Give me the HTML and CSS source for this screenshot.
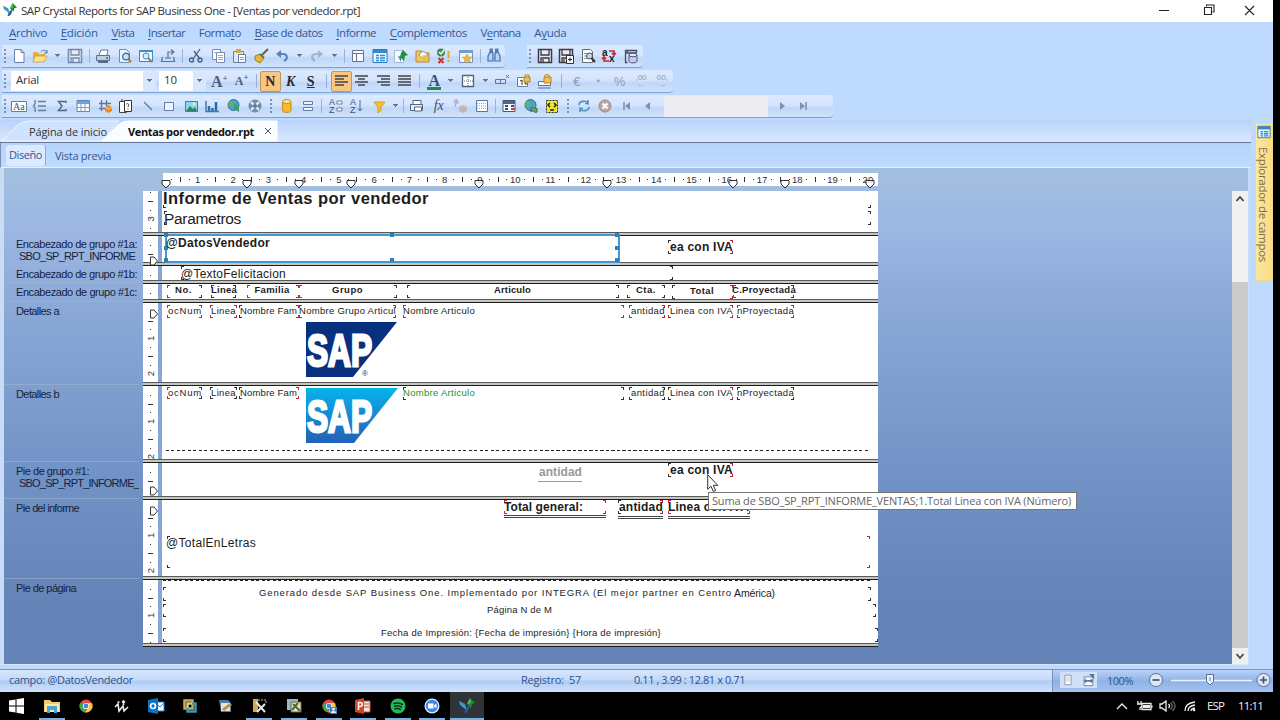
FILE: index.html
```html
<!DOCTYPE html>
<html lang="es">
<head>
    <meta charset="UTF-8">
    <title>SAP Crystal Reports for SAP Business One - [Ventas por vendedor.rpt]</title>
    <link rel="stylesheet" href="styles.css">
</head>
<body>
    <!-- Shared icons -->
    <svg class="defs">
        <defs>
            <linearGradient id="skyBlue" x1="0" y1="0" x2="0" y2="1"><stop offset="0" stop-color="#06b4ea"/><stop offset="1" stop-color="#2460b8"/></linearGradient>
            <symbol id="crystal" viewBox="0 0 16 16"><path d="M0 3l6 3 2 7-3-3-4-3z" fill="#3d9ad0"/><path d="M5 15c3 0 6-3 5-8l-3 3z" fill="#2b56a0"/><path d="M11 0l5 5-3 1-1 4-4-4z" fill="#178a2c"/><path d="M11 0l1 5-4 1z" fill="#55c14e"/></symbol>
            <symbol id="page" viewBox="0 0 16 16"><path d="M3.500 1.500h6.500l3 3v10h-9.500z" fill="#fff" stroke="#6580aa"/><path d="M10 1.500v3h3" fill="none" stroke="#6580aa"/></symbol>
            <symbol id="glass" viewBox="0 0 16 16"><path d="M2.500 1.500h7l3 3v10h-10z" fill="#e9f2ff" stroke="#6a8cb5"/><circle cx="9" cy="8.500" r="3.300" fill="#c6e4fb" stroke="#4179af" stroke-width="1.400"/><path d="M11 11l3 3" stroke="#a37831" stroke-width="2"/></symbol>
            <symbol id="floppy" viewBox="0 0 16 16"><path d="M1.500 1.500h13v13h-13z" fill="#e8ebf2" stroke="currentColor" stroke-width="1.500"/><path d="M4 2v5h8V2M4 14v-4h8v4M6 11v3" fill="none" stroke="currentColor" stroke-width="1.300"/></symbol>
            <symbol id="table" viewBox="0 0 16 16"><path d="M2 2.500h12.500v11H2z" fill="#fff" stroke="#5785bd"/><path d="M2 3h12.500v3H2z" fill="#69a4e0"/><path d="M2 9.500h12.500M6 6v8M10 6v8" stroke="#7d9dc7"/></symbol>
            <symbol id="window" viewBox="0 0 16 16"><path d="M1 1.500h14v13H1z" fill="#eef7ff" stroke="#2579b8"/><path d="M1 1.500h14v3.500H1z" fill="#3189ce"/><path d="M4 7.500h3M8 7.500h5M4 10h3M8 10h5M4 12.500h3M8 12.500h5" stroke="#318ad0" stroke-width="1.500"/></symbol>
            <symbol id="lines" viewBox="0 0 16 16"><path d="M3.500 3.500h9v3h-9zM3.500 9.500h9v3h-9z" fill="#eef5ff" stroke="#677ca1"/></symbol>
            <symbol id="cylinder" viewBox="0 0 16 16"><path d="M3.500 3.500v9c0 2.500 8.500 2.500 8.500 0v-9" fill="#f6bb2e" stroke="#c38a17"/><ellipse cx="7.700" cy="3.500" rx="4.200" ry="2" fill="#ffe69a" stroke="#c38a17"/></symbol>
            <symbol id="globe" viewBox="0 0 16 16"><circle cx="7.500" cy="7" r="5.500" fill="#4aa3cf" stroke="#336b98"/><path d="M3.500 3l4 1-1 3-3 2-1.500-2zM8.500 8l4-1-1 4-3 1z" fill="#65b65b"/></symbol>
            <symbol id="folder" viewBox="0 0 16 16"><path d="M1 4h5l1 2h6v8H1z" fill="#e5af39"/><path d="M3 8h12l-3 6H1z" fill="#ffe18b" stroke="#c6953b" stroke-width=".7"/><path d="M9 4c2-3 5-2 6 1M15 2v3h-3" fill="none" stroke="#4c79aa"/></symbol>
            <symbol id="chrome" viewBox="0 0 16 16"><circle cx="8" cy="8" r="6.500" fill="#e44b3c"/><path d="M2.300 5L8 8l-1 6.400A6.500 6.500 0 0 1 2.300 5z" fill="#37a853"/><path d="M8 5h5.800A6.500 6.500 0 0 1 7 14.400L10.500 9z" fill="#f8c932"/><circle cx="8" cy="8" r="3.100" fill="#fff"/><circle cx="8" cy="8" r="2.400" fill="#4285e8"/></symbol>
        </defs>
    </svg>

    <div class="desktop">
        <div class="window">
            <!-- Title -->
            <div class="titlebar">
                <svg class="app-icon"><use href="#crystal"/></svg>
                <span class="title" data-w="339">SAP Crystal Reports for SAP Business One - [Ventas por vendedor.rpt]</span>
                <svg class="win-controls" viewBox="0 0 100 16"><path d="M4 8.500h10M51.500 4.500V3h7.500v7h-1.500M49.500 5.500h7v7h-7zM90 4l9 9M99 4l-9 9" fill="none" stroke="#222" stroke-width="1.100"/></svg>
            </div>

            <!-- Menu -->
            <div class="menubar">
                <span data-w="38"><u>A</u>rchivo</span>
                <span data-w="37"><u>E</u>dición</span>
                <span data-w="23"><u>V</u>ista</span>
                <span data-w="37"><u>I</u>nsertar</span>
                <span data-w="42">Forma<u>t</u>o</span>
                <span data-w="68"><u>B</u>ase de datos</span>
                <span data-w="40"><u>I</u>nforme</span>
                <span data-w="77"><u>C</u>omplementos</span>
                <span data-w="40">V<u>e</u>ntana</span>
                <span data-w="32">A<u>y</u>uda</span>
            </div>

            <!-- Standard toolbar -->
            <div class="toolrow">
                <div class="toolbar standard">
                    <i class="grip"></i>
                    <svg class="ic"><use href="#page"/></svg>
                    <svg class="ic"><use href="#folder"/></svg><i class="drop"></i>
                    <svg class="ic soft"><use href="#floppy"/></svg><i class="sep"></i>
                    <svg class="ic"><path d="M4 7l2-5h7l-1 5" fill="#fff" stroke="#617ba2"/><path d="M1.500 7.500h13v5h-13z" fill="#c1cedd" stroke="#5b7193"/><path d="M3 14h10" stroke="#53698e" stroke-width="2"/><path d="M11 10h2" stroke="#38a947" stroke-width="2"/></svg>
                    <svg class="ic"><use href="#glass"/></svg>
                    <svg class="ic"><path d="M1.500 2.500h13v11h-13z" fill="#eff7ff" stroke="#358cc3"/><path d="M1 2h14v2H1z" fill="#3a93c9"/><circle cx="8" cy="8" r="3" fill="#d2edff" stroke="#538ab8"/><path d="M10 10l4 4" stroke="#9b7b3a" stroke-width="2"/></svg>
                    <svg class="ic"><path d="M2.500 9l-1 4.500h13L13.500 9M5 10h6M8 10V4h5M11 1.500L14 4l-3 2.500" fill="none" stroke="#596f91" stroke-width="1.200"/></svg><i class="sep"></i>
                    <svg class="ic"><path d="M12 1L5 11M6 3l6 8" stroke="#426085" stroke-width="1.300"/><circle cx="3.500" cy="12" r="2" fill="none" stroke="#426085" stroke-width="1.300"/><circle cx="12" cy="12" r="2" fill="none" stroke="#426085" stroke-width="1.300"/></svg>
                    <svg class="ic"><path d="M2.500 1.500h8v10h-8z" fill="#fff" stroke="#748cb1"/><path d="M6.500 4.500h8v10h-8z" fill="#fff" stroke="#748cb1"/><path d="M8 7.500h5M8 9.500h5M8 11.500h5M4 4.500h2" stroke="#9aacca"/></svg>
                    <svg class="ic"><path d="M2.500 3.500h10v11h-10z" fill="#e3e9f2" stroke="#697f9f"/><path d="M5 1h5v4H5z" fill="#d5ab3b"/><path d="M7.500 6.500h7v8h-7z" fill="#fff" stroke="#647da5"/><path d="M9 9.500h4M9 11.500h4" stroke="#8ca0c0"/></svg>
                    <svg class="ic"><path d="M15 1l-6 6" stroke="#745b2c" stroke-width="2"/><path d="M2 8l5-2 4 4-4 5-5-3z" fill="#e6bb29" stroke="#a57b1e"/><path d="M7 6l4 4" stroke="#526c90" stroke-width="2"/></svg>
                    <svg class="ic"><path d="M4 6h5c5 0 5 5 1 7" fill="none" stroke="#5583bb" stroke-width="2"/><path d="M2 6l5-4v8z" fill="#5583bb"/></svg><i class="drop"></i>
                    <svg class="ic faded"><path d="M12 6H7c-5 0-5 5-1 7" fill="none" stroke="#7d8ca3" stroke-width="2"/><path d="M14 6L9 2v8z" fill="#7d8ca3"/></svg><i class="drop"></i><i class="sep"></i>
                    <svg class="ic"><path d="M2.500 2.500h11v11h-11zM2.500 5.500h11M6.500 5.500v8" fill="#f7faff" stroke="#69758b"/></svg>
                    <svg class="ic"><use href="#window"/></svg>
                    <svg class="ic"><path d="M1.500 2.500h9v12h-9z" fill="#f5faff" stroke="#a9bcd6"/><path d="M10 2l5 5-3 1-1 5-4-4 1-4z" fill="#23913b"/><path d="M5 8l3 1v5z" fill="#3974b5"/></svg>
                    <svg class="ic"><path d="M1 3h6l1 2h6v9H1z" fill="#f0c55e" stroke="#b38b3b"/><path d="M8 3l5 4-5 4-4-4z" fill="#fff" stroke="#829bb5"/><circle cx="10" cy="10" r="3" fill="#efbd45"/></svg>
                    <svg class="ic"><circle cx="5" cy="4.500" r="4" fill="#478c52"/><path d="M3 4l2 2 3-4" fill="none" stroke="#fff" stroke-width="1.300"/><path d="M2.500 10l5 5M7.500 10l-5 5" stroke="#c3352f" stroke-width="2"/><path d="M12.500 3v7M12.500 12v2" stroke="#e5a622" stroke-width="2"/></svg>
                    <svg class="ic"><path d="M1.500 2.500h13v12h-13z" fill="#edf6ff" stroke="#7194bd"/><path d="M1 2h14v3H1z" fill="#6c9fcb"/><path d="M9 6l1.500 3 3.500.3-2.700 2 1 3.200L9 12.700l-3 1.800 1-3.200-2.700-2L7.500 9z" fill="#f2b739" stroke="#ca8222" stroke-width=".5"/></svg><i class="sep"></i>
                    <svg class="ic"><path d="M3.500 2h2v3M12.500 2h-2v3" stroke="#597cab" stroke-width="3" fill="none"/><path d="M2 8l2-4 3 1v8H2zM14 8l-2-4-3 1v8h5z" fill="#b5d5f2" stroke="#426fac" stroke-width="1.200"/></svg>
                </div>
                <div class="toolbar addon">
                    <i class="grip wide"></i>
                    <svg class="ic dark"><use href="#floppy"/></svg>
                    <svg class="ic dark"><use href="#floppy"/><path d="M8.500 7.500h7v8h-7z" fill="#fff" stroke="#333"/><path d="M10 11.500h4M12 9.500v4" stroke="#222"/></svg>
                    <svg class="ic"><path d="M2.500 1.500h8l2 2v11h-10z" fill="#fff" stroke="#5f6a78"/><path d="M4 5.500h5M4 8h3M4 10.500h3" stroke="#8a929d"/><circle cx="9.500" cy="8" r="3" fill="#ccd6e2" stroke="#424b59"/><path d="M11.500 10l3.500 4" stroke="#333" stroke-width="2"/></svg>
                    <svg class="ic"><text class="swap" x="1" y="8">a</text><text class="swap" x="8" y="14">x</text><path d="M8 3h5v4M11 5l2 2 2-2M8 13H3V9M1 11l2-2 2 2" fill="none" stroke="#cf2630" stroke-width="1.700"/></svg>
                    <svg class="ic"><path d="M4.500 14.500h-2V2.500h11V5M2.500 5h11M4.500 2v3" stroke="#414c65" stroke-width="1.300" fill="none"/><path d="M6 7v6c0 2.500 8 2.500 8 0V7" fill="#cccbe6" stroke="#4f557c"/><ellipse cx="10" cy="7" rx="4" ry="1.800" fill="#e7e6fa" stroke="#4f557c"/></svg>
                </div>
            </div>

            <!-- Format toolbar -->
            <div class="toolrow">
                <div class="toolbar format">
                    <i class="grip"></i>
                    <div class="combo font"><span data-w="23">Arial</span><i class="drop"></i></div>
                    <div class="combo size"><span data-w="13">10</span><i class="drop"></i></div>
                    <span class="letter grow">A<sup>+</sup></span>
                    <span class="letter shrink">A<sup>+</sup></span>
                    <i class="sep"></i>
                    <span class="letter pressed">N</span>
                    <span class="letter italic">K</span>
                    <span class="letter under">S</span>
                    <i class="sep wide"></i>
                    <span class="pressed"><svg class="ic"><path d="M2 3h13M2 6h9M2 9h13M2 12h9" stroke="#444" stroke-width="1.700"/></svg></span>
                    <svg class="ic"><path d="M1 3h13M4 6h7M1 9h13M4 12h7" stroke="#444" stroke-width="1.700"/></svg>
                    <svg class="ic"><path d="M1 3h13M5 6h9M1 9h13M5 12h9" stroke="#444" stroke-width="1.700"/></svg>
                    <svg class="ic"><path d="M1 3h13M1 6h13M1 9h13M1 12h13" stroke="#444" stroke-width="1.700"/></svg>
                    <i class="sep"></i>
                    <span class="letter color">A</span><i class="drop"></i>
                    <svg class="ic"><path d="M2.500 2.500h11v11h-11z" fill="#fff" stroke="#52627c" stroke-width="1.300"/><path d="M8 4v9M4 8h9" stroke="#546b8e" stroke-dasharray="1 1"/></svg><i class="drop"></i>
                    <svg class="ic"><path d="M1.500 6.500h10v4h-10zM6.500 6.500v4M12 2l3 3M15 2l-3 3" fill="none" stroke="#61789c"/></svg>
                    <svg class="ic"><path d="M1.500 4.500h10v9h-10z" fill="#fff" stroke="#687b98"/><path d="M4 8l2-1v5M8 10h2v2" stroke="#333" fill="none"/><path d="M9 4V2h4v2" fill="none" stroke="#b28e26"/><path d="M8 4h6v5H8z" fill="#f3c640" stroke="#a58423"/></svg>
                    <svg class="ic"><path d="M1.500 8.500h12v4h-12zM1 15h13" fill="#f8fbff" stroke="#53739f"/><circle cx="10" cy="4" r="2.500" fill="none" stroke="#ab801e"/><path d="M7 4h7v6H7z" fill="#f7bd4a" stroke="#b7832c"/></svg>
                    <i class="sep wide"></i>
                    <span class="num">€</span><span class="num dot">•</span><span class="num">%</span><span class="num decimals">,00<br>←</span><span class="num decimals">00,<br>→</span>
                </div>
            </div>

            <!-- Insert and navigation toolbars -->
            <div class="toolrow">
                <div class="toolbar insert">
                    <i class="grip"></i>
                    <svg class="ic"><path d="M.5 3.500h15v10H.5z" fill="#fff" stroke="#677c9d"/><text class="aa" x="2" y="12">Aa</text></svg>
                    <svg class="ic"><path d="M6 3.500h8M6 8h8M6 12.500h8M4 3H3v3L1.500 8 3 10v3h1" stroke="#687e9e" fill="none" stroke-width="1.300"/></svg>
                    <svg class="ic"><path d="M12 5V3.500H4.500L8 8l-3.500 4.500H12V11" fill="none" stroke="#506783" stroke-width="1.400"/></svg>
                    <svg class="ic"><use href="#table"/></svg>
                    <svg class="ic"><path d="M2 5.500h12M2 10.500h7M4.500 2v11M9.500 2v6" stroke="#62789a" stroke-width="1.300"/><path d="M8 9l3.500-2L15 9v4l-3.500 2L8 13z" fill="#e68a28"/><path d="M8 9l3.500 2L15 9" stroke="#ffd086" fill="none"/></svg>
                    <svg class="ic"><path d="M1.500 3.500h7v11h-7z" fill="#fff" stroke="#444"/><path d="M6.500 2.500h7v11h-7z" fill="#fff" stroke="#333"/><path d="M8.500 6c1-1 3 0 2 1.500L10 9M10 10.500v1M4 1v3" stroke="#333" fill="none"/></svg>
                    <svg class="ic"><path d="M4 4l8 8" stroke="#637898" stroke-width="1.300"/></svg>
                    <svg class="ic"><path d="M3.500 4.500h9v8h-9z" fill="#ecf5ff" stroke="#647da4"/></svg>
                    <svg class="ic"><path d="M2.500 3.500h12v10h-12z" fill="#8cd5f4" stroke="#4e7b8d"/><path d="M3 13l4-5 3 3 2-2 2 4z" fill="#2c8660"/><circle cx="11" cy="6" r="1.500" fill="#fff36b"/></svg>
                    <svg class="ic"><path d="M2 3v10.500h13" stroke="#4179ae" stroke-width="1.500" fill="none"/><path d="M5 13V8M8.500 13v-3M12 13V4" stroke="#2370ad" stroke-width="2.500"/></svg>
                    <svg class="ic"><use href="#globe"/><path d="M8 6l5 2v6l-5-3z" fill="#3d9970"/></svg>
                    <svg class="ic"><circle cx="8" cy="8" r="6.500" fill="#748faa"/><path d="M4 4l8 8M12 4l-8 8" stroke="#eef5fb" stroke-width="2"/><circle cx="8" cy="8" r="2" fill="#547899"/></svg>
                    <i class="grip inner"></i>
                    <svg class="ic"><use href="#cylinder"/></svg>
                    <svg class="ic"><use href="#lines"/></svg>
                    <i class="sep"></i>
                    <svg class="ic"><text class="az" x="1" y="7">A</text><text class="az" x="1" y="15">Z</text><path d="M9 3h5v3H9zM9 10h5v3H9z" fill="#fff" stroke="#6b7c97"/></svg>
                    <svg class="ic"><text class="az" x="1" y="7">A</text><text class="az" x="1" y="15">Z</text><path d="M11 2v11M9 10.500l2 2.500 2-2.500" stroke="#526986" fill="none"/></svg>
                    <svg class="ic"><path d="M3 4h11L10 9v3l-3 3V9z" fill="#f4c22b" stroke="#d59d1a"/></svg><i class="drop"></i><i class="sep"></i>
                    <svg class="ic"><path d="M4 2.500h8v5H4z" fill="#fff" stroke="#546883"/><path d="M1.500 6.500h12v6h-12z" fill="#e7eef7" stroke="#546883"/><path d="M5.500 9h7v4h-7z" fill="#fff" stroke="#546883"/></svg>
                    <span class="fx">fx</span>
                    <svg class="ic faded"><path d="M1 4h6M5 1l-2 8M2 1l4 5" stroke="#777"/><path d="M7 9l4-2 4 2v4l-4 2-4-2z" fill="#c09d75"/></svg>
                    <svg class="ic"><path d="M2.500 2.500h11v11h-11z" fill="#fff" stroke="#5a779f"/><path d="M3 5.500h10M3 8h10M3 10.500h10" stroke="#93abc9" stroke-dasharray="1 1"/></svg>
                    <i class="sep"></i>
                    <svg class="ic"><path d="M2 2.500h12v11H2z" fill="#fff" stroke="#445878"/><path d="M2 3h12v3H2z" fill="#4b6691"/><path d="M4 8h3M4 11h3M10 8h3" stroke="#244e8c" stroke-width="2"/><path d="M10 11h4" stroke="#d43737" stroke-width="2"/></svg>
                    <svg class="ic"><use href="#globe"/><path d="M8 10c2-3 4 2 6 0v4c-2 2-4-3-6 0z" fill="#6a9e82" stroke="#346b5d"/></svg>
                    <svg class="ic"><path d="M2.500 2.500h11v12h-11z" fill="#f1e531" stroke="#2d2d24" stroke-dasharray="2 1"/><path d="M6 5L4 7l2 2M10 5l2 2-2 2M6 12h4" stroke="#222" stroke-width="1.500" fill="none"/></svg>
                    <i class="grip inner"></i>
                    <svg class="ic"><path d="M3 7c0-4 7-5 9-2V2M12 5.500H9M13 9c0 4-7 5-9 2v3M4 10.500h3" fill="none" stroke="#5991bd" stroke-width="1.600"/></svg>
                    <svg class="ic"><circle cx="8" cy="8" r="6" fill="#baa6a3" stroke="#998a8b"/><path d="M5.500 5.500l5 5M10.500 5.500l-5 5" stroke="#fff" stroke-width="2"/></svg>
                    <svg class="ic"><path d="M5 4v8" stroke="#8191ad" stroke-width="1.600"/><path d="M11 4v8L6 8z" fill="#8191ad"/></svg>
                    <svg class="ic"><path d="M10 4v8L5 8z" fill="#8191ad"/></svg>
                    <div class="pagebox"></div>
                    <svg class="ic"><path d="M6 4v8l5-4z" fill="#8191ad"/></svg>
                    <svg class="ic"><path d="M5 4v8l5-4z" fill="#8191ad"/><path d="M11 4v8" stroke="#8191ad" stroke-width="1.600"/></svg>
                </div>
            </div>

            <div class="main">
                <div class="document">
                    <!-- Document tabs -->
                    <div class="tabs">
                        <svg class="tab-shapes" viewBox="0 0 290 22"><path d="M2 21L18 5Q22 1 28 1H119L101 21z" fill="#cfe2ff" stroke="#eef6ff"/><path d="M102 21L118 5Q122 1 128 1H277V21z" fill="#fafdff" stroke="#fff"/></svg>
                        <span class="tab-home" data-w="78">Página de inicio</span>
                        <span class="tab-report" data-w="126">Ventas por vendedor.rpt</span>
                        <svg class="close" viewBox="0 0 8 8"><path d="M1 1l6 6M7 1L1 7" stroke="#555"/></svg>
                    </div>
                    <div class="viewtabs">
                        <span class="selected" data-w="33">Diseño</span>
                        <span data-w="56">Vista previa</span>
                    </div>

                    <!-- Report designer -->
                    <div class="workspace">
                        <div class="hruler"><svg id="hruler" width="715" height="20"></svg></div>
                        <div class="designer">
                            <div class="sections" id="sections">
                                <div class="section title-section" data-origin="-78"><div class="label"></div></div>
                                <div class="section group-a" data-marker="25"><div class="label"><span data-w="121">Encabezado de grupo #1a:</span><span class="sub" data-w="116">SBO_SP_RPT_INFORME</span></div></div>
                                <div class="section group-b"><div class="label"><span data-w="121">Encabezado de grupo #1b:</span></div></div>
                                <div class="section group-c"><div class="label"><span data-w="121">Encabezado de grupo #1c:</span></div></div>
                                <div class="section details-a" data-marker="11"><div class="label"><span data-w="43">Detalles a</span></div></div>
                                <div class="section details-b"><div class="label"><span data-w="43">Detalles b</span></div></div>
                                <div class="section group-foot" data-marker="28"><div class="label"><span data-w="73">Pie de grupo #1:</span><span class="sub" data-w="120">SBO_SP_RPT_INFORME_</span></div></div>
                                <div class="section report-foot" data-marker="11"><div class="label"><span data-w="63">Pie del informe</span></div></div>
                                <div class="section page-foot"><div class="label"><span data-w="60">Pie de página</span></div></div>
                            </div>
                            <div class="canvas" id="canvas">
                                <svg class="logo logo-dark" viewBox="0 0 92 56"><path d="M0 0h91L47 55H0z" fill="#07317f"/><text x="1" y="43.500" textLength="65" lengthAdjust="spacingAndGlyphs">SAP</text><text class="reg" x="56" y="54">®</text></svg>
                                <svg class="logo logo-light" viewBox="0 0 92 56"><path d="M0 0h92L48 55H0z" fill="url(#skyBlue)"/><text x="1" y="43.500" textLength="65" lengthAdjust="spacingAndGlyphs">SAP</text></svg>
                                <div class="selection"><i></i><i></i><i></i><i></i><i></i><i></i><i></i><i></i></div>
                                <div class="tooltip"><span data-w="359">Suma de SBO_SP_RPT_INFORME_VENTAS;1.Total Linea con IVA (Número)</span></div>
                                <svg class="cursor" viewBox="0 0 12 19"><path d="M.7.700v14.500l3.300-3 2.300 5.300 2.300-1-2.300-5.200h4.500z" fill="#fff" stroke="#333"/></svg>
                            </div>
                            <div class="scrollbar">
                                <svg viewBox="0 0 16 16"><path d="M4.500 10L8 6l3.500 4" fill="none" stroke="#444" stroke-width="1.800"/></svg>
                                <div class="thumb"></div>
                                <svg viewBox="0 0 16 16"><path d="M4.500 6L8 10l3.500-4" fill="none" stroke="#444" stroke-width="1.800"/></svg>
                            </div>
                        </div>
                    </div>
                </div>

                <div class="sidebar">
                    <div class="sidetab">
                        <svg class="ic" viewBox="0 0 16 16"><use href="#window"/></svg>
                        <span data-w="115">Explorador de campos</span>
                    </div>
                </div>
            </div>

            <!-- Status bar -->
            <div class="statusbar">
                <span class="field-name"><b data-w="124">campo: @DatosVendedor</b></span>
                <span class="record"><b data-w="60">Registro:&nbsp; 57</b></span>
                <span class="coords"><b data-w="111">0.11 , 3.99 : 12.81 x 0.71</b></span>
                <div class="zoom">
                    <div class="views">
                        <svg class="ic" viewBox="0 0 16 16"><path d="M4.500 2.500h7v11h-7z" fill="#fff" stroke="#8090a8"/><path d="M6 5h4M6 7h4M6 9h4" stroke="#bbc6d4"/></svg>
                        <svg class="ic" viewBox="0 0 16 16"><path d="M3.500 4.500h10v10h-10z" fill="#fff" stroke="#64799b"/><path d="M9 1h6v6zM3 9l3-3v2h5V6l3 3-3 3v-2H6v2z" fill="#59769c"/></svg>
                    </div>
                    <b data-w="26">100%</b>
                    <svg class="slider" viewBox="0 0 120 16"><path d="M23 8.500h81" stroke="#e9f2ff" stroke-width="1.500"/><circle cx="8" cy="8" r="6.500" fill="#dce8f8" stroke="#62728c"/><path d="M4.500 8h7" stroke="#435066" stroke-width="1.700"/><path d="M58.500 2.500h7v7L62 13l-3.500-3.500z" fill="#e9f2fe" stroke="#5a6f94"/><path d="M62 5v4" stroke="#6b7e9e"/><circle cx="115.500" cy="8" r="6.500" fill="#dce8f8" stroke="#62728c"/><path d="M112 8h7M115.500 4.500v7" stroke="#435066" stroke-width="1.700"/></svg>
                </div>
            </div>
        </div>

        <!-- Windows taskbar -->
        <div class="taskbar">
            <span class="task"><svg class="ic"><path d="M0 2.500l6.500-1v6H0zM7.500 1.300L15 0v7.500H7.500zM0 8.500h6.500v6L0 13.500zM7.500 8.500H15V16l-7.500-1.300z" fill="#fff"/></svg></span>
            <span class="task open"><svg class="ic"><path d="M0 2h6l2 2h8v10H0z" fill="#f4cd62"/><path d="M1 6h14v8H1z" fill="#ffe9a1"/><path d="M3 8h10v7h-3v-3H6v3H3z" fill="#46a6d7"/></svg></span>
            <span class="task"><svg class="ic"><use href="#chrome"/></svg></span>
            <span class="task"><svg class="ic"><path d="M2 9l3-3 1 7 4-5 1 5 4-4M4.500 4h2M10.500 3v4M9 4.500L10.500 3 12 4.500" fill="none" stroke="#eee" stroke-width="1.600"/></svg></span>
            <span class="task"><svg class="ic"><path d="M7 4h9v9H7z" fill="#fff" stroke="#2580c3"/><path d="M8 5l4 4 4-4" stroke="#2580c3" fill="none"/><path d="M0 2l10-2v16L0 14z" fill="#0872c6"/><circle cx="5" cy="8" r="2.500" fill="none" stroke="#fff" stroke-width="1.700"/></svg></span>
            <span class="task"><svg class="ic"><path d="M2.500 2.500h8v8h-8z" fill="none" stroke="#e6a23c" stroke-width="2.500"/><path d="M5.500 5.500h8v8h-8z" fill="none" stroke="#3c99b5" stroke-width="2.500"/><path d="M5.500 10V5.500H10" fill="none" stroke="#eed04c" stroke-width="2"/></svg></span>
            <span class="task"><svg class="ic"><path d="M2 2h9l3 3v9H4z" fill="#517ba8"/><path d="M4 5h9v8H4z" fill="#e7e5d4"/><path d="M5 11l8-6 2 2-8 6z" fill="#b88b58"/></svg></span>
            <span class="task open"><svg class="ic"><path d="M2 1h5v13H2z" fill="#d3a74f"/><path d="M7 2h8v4" fill="none" stroke="#b7b7b0" stroke-dasharray="2 1"/><path d="M5 4l9 10M14 6l-8 8" stroke="#e9e9e9" stroke-width="2"/></svg></span>
            <span class="task open"><svg class="ic"><path d="M1 1h11v11H1z" fill="#9fb7c4"/><path d="M5 4h10v10H5z" fill="#eee4a2" stroke="#60654c"/><path d="M6 12l6-7M7 6l7 7" stroke="#4e6448" stroke-width="2"/></svg></span>
            <span class="task open"><svg class="ic"><use href="#chrome"/><path d="M9 9h7v7H9z" fill="#427dc2"/><circle cx="12.500" cy="11" r="1.500" fill="#d7ecff"/><path d="M10 15c0-3 5-3 5 0z" fill="#d7ecff"/></svg></span>
            <span class="task open"><svg class="ic"><path d="M7 3h8v11H7z" fill="#f6e6df" stroke="#cb5337"/><path d="M9 6h5M9 9h5" stroke="#cb5337"/><path d="M0 2l9-2v16l-9-2z" fill="#d24726"/><path d="M3.500 12V4.500H5c3 0 3 4 0 4H3.500" fill="none" stroke="#fff" stroke-width="1.500"/></svg></span>
            <span class="task open"><svg class="ic"><circle cx="8" cy="8" r="7.500" fill="#20bd5c"/><path d="M4 5.500c3-1 6-.5 8.500 1M4.500 8.200c2.500-.8 5-.3 7 1M5 10.800c2-.5 4-.2 5.500.8" fill="none" stroke="#102b19" stroke-width="1.500" stroke-linecap="round"/></svg></span>
            <span class="task open"><svg class="ic"><circle cx="8" cy="8" r="7.500" fill="#e6f1ff"/><circle cx="8" cy="8" r="6.200" fill="#3b86ed"/><path d="M4 5.500h5.500v5H4zM10.300 7l2.200-1.300v4.600L10.300 9z" fill="#fff"/></svg></span>
            <span class="task open active"><svg class="ic"><use href="#crystal"/></svg></span>
            <div class="tray">
                <svg class="tray-icons" viewBox="0 0 82 16"><g fill="none" stroke="#eee" stroke-width="1.300"><path d="M1 11l5-5 5 5M26 5.500h9v6h-9zM36 7.500v2M22 3v3M25 3v3M21 6h5v2l-2 2v2M44 6h2l4-3v10l-4-3h-2zM52.500 6q2 2 0 4"/><path d="M54.500 4.500q3.500 3.500 0 7M56.500 3q5 5 0 10" stroke="#666"/><path d="M69 13q0-8 10-9M72 13q0-5 7-6M75 13q0-2.500 4-3"/></g><path d="M27 7h7v3h-7z" fill="#eee"/><circle cx="78" cy="12" r="1.300" fill="#eee"/></svg>
                <span data-w="17">ESP</span>
                <span class="clock" data-w="25">11:11</span>
            </div>
        </div>
    </div>
    <script src="script.js"></script>
</body>
</html>
```
FILE: styles.css
```css
body {
    margin: 0;
    background: #000;
    font-family: "Open Sans", "Noto Sans", sans-serif;
    font-size: 12px;
    color: #35588f;
    overflow: hidden;
}

.defs {
    position: absolute;
    width: 0;
    height: 0;
}

.desktop {
    display: flex;
    flex-direction: column;
    width: 1280px;
    height: 720px;
}

.window {
    display: flex;
    flex-direction: column;
    width: 1273px;
    height: 692px;
    background: #bfdaff;
}

span, b {
    white-space: nowrap;
}

b {
    font-weight: normal;
}

/* Title and menu */
.titlebar {
    display: flex;
    align-items: center;
    height: 22px;
    background: #fff;
    color: #333;
}

.app-icon {
    width: 14px;
    height: 14px;
    margin: 0 4px 2px 3px;
}

.title {
    flex: 1;
    margin-bottom: 1px;
    font-size: 11.5px;
}

.win-controls {
    flex: none;
    width: 100px;
    height: 16px;
    margin: 0 18px 2px 0;
}

.menubar {
    display: flex;
    align-items: center;
    gap: 13.7px;
    height: 21px;
    padding: 0 0 2px 9px;
    font-size: 11.5px;
}

u {
    text-underline-offset: 2px;
}

/* Toolbars */
.toolrow {
    display: flex;
    gap: 22px;
    height: 23px;
    margin: 0 0 2px 2px;
}

.toolbar {
    display: flex;
    align-items: center;
    box-sizing: border-box;
    height: 23px;
    background: linear-gradient(#dceaff, #d3e4fd 45%, #c1d7f7 60%, #cfe3fd);
    border-bottom: 1px solid #7c9fd0;
    border-radius: 0 4px 4px 0;
}

.standard {
    width: 503px;
}

.addon {
    width: 116px;
}

.format {
    width: 671px;
}

.insert {
    width: 831px;
}

.ic {
    flex: none;
    width: 16px;
    height: 16px;
    margin: 0 2.75px;
    overflow: visible;
    font-family: "Liberation Serif", serif;
}

.soft {
    color: #6f89ae;
}

.dark {
    color: #3c3948;
}

.faded {
    opacity: .55;
}

.grip {
    flex: none;
    width: 2px;
    height: 14px;
    margin: 0 2px;
    background: repeating-linear-gradient(#7893ba 0 2px, transparent 2px 4px);
}

.grip.wide {
    margin: 0 3px 0 2px;
}

.grip.inner {
    margin: 0 4px;
}

.sep {
    flex: none;
    width: 1px;
    height: 14px;
    margin: 0 3px;
    background: #9ab2d6;
}

.insert .sep {
    margin: 0 3px 0 2px;
}

.insert .drop {
    width: 11px;
}

.sep.wide {
    margin: 0 4px 0 5px;
}

.drop {
    flex: none;
    width: 13px;
    height: 4px;
    background: conic-gradient(from -45deg at 50% 75%, #64748e 90deg, transparent 0) center / 5px 4px no-repeat;
}

.combo {
    display: flex;
    align-items: center;
    justify-content: space-between;
    box-sizing: border-box;
    height: 20px;
    padding-left: 5px;
    background: #fff;
    color: #333;
    font-size: 11.5px;
    line-height: 16px;
}

.combo .drop {
    height: 20px;
    background-color: #d8e7fc;
}

.combo span {
    margin-bottom: 2px;
}

.font {
    width: 146px;
    margin-left: 3px;
}

.size {
    width: 47px;
    margin: 0 2px 0 3px;
}

.letter {
    flex: none;
    width: 20px;
    text-align: center;
    font: bold 14px/19px "Liberation Serif", serif;
    color: #292929;
}

.letter sup {
    font-size: 9px;
    line-height: 0;
}

.grow {
    width: 23px;
    font-size: 16px;
    color: #4e5d77;
}

.shrink {
    width: 22px;
    font-size: 12px;
    color: #4e5d77;
}

.pressed {
    display: flex;
    align-items: center;
    justify-content: center;
    box-sizing: border-box;
    width: 21px;
    height: 21px;
    background: #f8c681;
    border: 1px solid #c1965b;
    border-radius: 2px;
}

.italic {
    font-style: italic;
}

.under {
    text-decoration: underline;
}

.color {
    margin-left: 4px;
    height: 17px;
    width: 14px;
    margin-right: 3px;
    box-sizing: border-box;
    border-bottom: 3px solid #159036;
    font-size: 16px;
    line-height: 15px;
    color: #355181;
}

.num {
    width: 21.5px;
    text-align: center;
    color: #8c9ab3;
    font: 13px "Liberation Sans", sans-serif;
}

.num.dot {
    font-size: 9px;
}

.num.decimals {
    font-size: 8px;
    line-height: 7px;
}

.fx {
    width: 21.5px;
    text-align: center;
    font: italic 14px "Liberation Serif", serif;
    color: #3d4c65;
}

.swap {
    font: bold 10px "Liberation Sans", sans-serif;
    fill: #222;
}

.aa {
    font-size: 10px;
    fill: #42536f;
}

.az {
    font: 9px "Liberation Sans", sans-serif;
    fill: #42536f;
}

.pagebox {
    width: 104px;
    height: 21px;
    margin: 0 3px 0 5px;
    background: #ececf1;
}

/* Document area */
.main {
    display: flex;
    flex: 1;
    min-height: 0;
}

.document {
    display: flex;
    flex-direction: column;
    width: 1251px;
}

.tabs {
    display: flex;
    position: relative;
    align-items: center;
    box-sizing: border-box;
    height: 23px;
    padding-left: 29px;
    background: linear-gradient(#b8d3fb, #dae8ff);
    border-bottom: 1px solid #66789a;
    color: #333;
    font-size: 11px;
}

.tab-shapes {
    position: absolute;
    left: 0;
    bottom: 0;
    width: 290px;
    height: 22px;
}

.tab-home, .tab-report, .close {
    position: relative;
}

.tab-report {
    margin-left: 21px;
    font-weight: bold;
    color: #111;
}

.close {
    width: 8px;
    height: 8px;
    margin-left: 10px;
}

.viewtabs {
    display: flex;
    align-items: center;
    height: 24px;
    padding-left: 5px;
    background: linear-gradient(#b5d2fa, #bfdcff);
    border-left: 1px solid #7890b5;
    border-bottom: 1px solid #e5f1ff;
    font-size: 11px;
}

.viewtabs .selected {
    height: 21px;
    line-height: 20px;
    margin: 0 9px 0 0;
    padding: 0 3px;
    background: #dceaff;
    border-right: 1px solid #8ea9d2;
    border-radius: 3px;
}

.workspace {
    box-sizing: border-box;
    height: 497px;
    width: 1249px;
    padding-top: 5px;
    background: linear-gradient(#a4c0e0, #9bb6e2 13%, #8aa8d6 29%, #7293c6 61%, #6484b7 88%);
    border-left: 4px solid #c9dcf3;
    border-bottom: 1px solid #d7e5f9;
    border-right: 1px solid #cde0fb;
}

.hruler {
    width: 715px;
    height: 13px;
    margin: 0 0 5px 159px;
    background: #fff;
}

#hruler {
    display: block;
    position: relative;
    z-index: 1;
    overflow: visible;
}

.designer {
    display: flex;
    position: relative;
    height: 473px;
}

.sections {
    width: 874px;
}

.section {
    display: flex;
    box-sizing: content-box;
}

.label {
    display: flex;
    flex-direction: column;
    box-sizing: border-box;
    width: 135px;
    margin: -2px 4px 0 0;
    padding: 3px 0 0 12px;
    border-top: 1px solid #a4b6ce88;
    overflow: hidden;
    color: #15233d;
    font: 11px/12px "Liberation Sans", sans-serif;
}

.label .sub {
    margin-left: 3px;
}

.title-section .label {
    border: none;
}

/* The divider under each section is painted in the transparent border */
.body {
    display: flex;
    width: 735px;
    border-bottom: 4px solid transparent;
    background:
        linear-gradient(#5a5a5a 0 25%, #c4c6c2 25% 75%, #1c1c1c 75%) bottom / 100% 4px no-repeat border-box border-box,
        #fff;
}

.vruler {
    width: 15px;
    height: 100%;
    overflow: visible;
}

.body::after {
    content: "";
    width: 4px;
    background: #87a5d5;
}

.title-section { height: 45px; }
.group-a { height: 30px; }
.group-b { height: 18px; }
.group-c { height: 19px; }
.details-a { height: 83px; }
.details-b { height: 77px; }
.group-foot { height: 37px; }
.report-foot { height: 80px; }
.page-foot { height: 67px; }

.ruler-text {
    font: 9.5px "Liberation Sans", sans-serif;
    fill: #333;
}

.scrollbar {
    display: flex;
    flex-direction: column;
    width: 16px;
    height: 473px;
    margin-left: 354px;
    background: #f0f0f0;
}

.thumb {
    flex: 1;
    margin-top: 75px;
    background: #cbcbcb;
}

/* Report objects are placed freely on the canvas */
.canvas {
    position: absolute;
    left: 139px;
    top: 0;
    width: 735px;
    height: 456px;
    clip-path: inset(0 -300px 0 0);
}

.field {
    --l: #333;
    --r: #333;
    position: absolute;
    background:
        linear-gradient(var(--l) 0 0) 0 0 / 3px 1px,
        linear-gradient(var(--l) 0 0) 0 0 / 1px 3px,
        linear-gradient(var(--l) 0 0) 0 100% / 3px 1px,
        linear-gradient(var(--l) 0 0) 0 100% / 1px 3px,
        linear-gradient(var(--r) 0 0) 100% 0 / 3px 1px,
        linear-gradient(var(--r) 0 0) 100% 0 / 1px 3px,
        linear-gradient(var(--r) 0 0) 100% 100% / 3px 1px,
        linear-gradient(var(--r) 0 0) 100% 100% / 1px 3px;
    background-repeat: no-repeat;
}

.red-left { --l: #c3213c; }
.red-right { --r: #c3213c; }

.text {
    position: absolute;
    font-family: "Liberation Sans", sans-serif;
    line-height: 1;
    color: #1c1c1c;
}

.bold {
    font-weight: bold;
}

.green {
    color: #23902a;
}

.gray {
    color: #999;
}

.line {
    position: absolute;
    height: 1px;
    background: #444;
}

.line.dashed {
    background: repeating-linear-gradient(90deg, #222 0 3px, transparent 3px 5.5px);
}

.line.light {
    background: #999;
}

.selection {
    position: absolute;
    left: 22px;
    top: 43px;
    width: 451px;
    height: 25px;
    border: 2px solid #4396d2;
}

.selection i {
    position: absolute;
    width: 4px;
    height: 4px;
    margin: -3px;
    background: #2b80be;
}

.selection i:nth-child(1) { left: 0; top: 0; }
.selection i:nth-child(2) { left: 50%; top: 0; }
.selection i:nth-child(3) { left: 100%; top: 0; }
.selection i:nth-child(4) { left: 0; top: 50%; }
.selection i:nth-child(5) { left: 100%; top: 50%; }
.selection i:nth-child(6) { left: 0; top: 100%; }
.selection i:nth-child(7) { left: 50%; top: 100%; }
.selection i:nth-child(8) { left: 100%; top: 100%; }

.logo {
    position: absolute;
    left: 163px;
    width: 92px;
    height: 56px;
    overflow: visible;
}

.logo text {
    font: bold 45px "Liberation Sans", sans-serif;
    fill: #fff;
    stroke: #fff;
    stroke-width: 2.8px;
}

.logo .reg {
    font: 8px "Liberation Sans", sans-serif;
    fill: #333;
    stroke: none;
}

.logo-dark { top: 131px; }
.logo-light { top: 197px; }

.tooltip {
    position: absolute;
    z-index: 2;
    left: 565px;
    top: 301px;
    box-sizing: border-box;
    width: 369px;
    height: 18px;
    padding-left: 3px;
    background: #fff;
    border: 1px solid #777;
    color: #666;
    font-size: 11px;
    line-height: 15px;
}

.cursor {
    position: absolute;
    z-index: 3;
    left: 564px;
    top: 283px;
    width: 12px;
    height: 19px;
}

/* Field explorer tab */
.sidebar {
    flex: 1;
    padding: 3px 0 0 4px;
}

.sidetab {
    box-sizing: border-box;
    width: 18px;
    height: 158px;
    padding-top: 1px;
    background: linear-gradient(90deg, #fde69d, #fbdc84);
    border: 1px solid #f4d98a;
    color: #776c50;
    font-size: 11.5px;
}

.sidetab .ic {
    display: block;
    width: 14px;
    height: 14px;
    margin: 0 1px 8px;
}

.sidetab span {
    display: block;
    writing-mode: vertical-rl;
    line-height: 15px;
}

/* Status bar */
.statusbar {
    display: flex;
    align-items: center;
    height: 22px;
    background: linear-gradient(#d7e6fc, #c4daf8 45%, #afcbf5 50%, #d2e3fb);
    border-top: 1px solid #7d95b9;
    color: #2f5288;
    font-size: 11px;
    line-height: 13px;
}

.statusbar > span {
    margin-bottom: 3px;
}

.field-name {
    width: 512px;
    padding-left: 9px;
}

.record {
    width: 113px;
}

.coords {
    width: 418px;
}

.zoom {
    display: flex;
    align-items: center;
    flex: 1;
    box-sizing: border-box;
    height: 22px;
    padding: 0 0 2px 7px;
    background: linear-gradient(#b8d2f8, #8fb2e6 50%, #a3c2ee);
    border-left: 1px solid #7592c0;
}

.views {
    display: flex;
    align-items: center;
    gap: 4px;
    width: 37px;
    height: 16px;
    margin-right: 10px;
    background: #d0e0f7;
}

.views .ic {
    height: 14px;
    margin: 0;
}

.slider {
    flex: none;
    width: 120px;
    height: 16px;
    margin-left: 15px;
    overflow: visible;
}

/* Taskbar */
.taskbar {
    display: flex;
    width: 1280px;
    height: 28px;
    background: #000;
    color: #eee;
}

.task {
    display: flex;
    align-items: center;
    justify-content: center;
    box-sizing: border-box;
    width: 34.6px;
    border: 0 solid transparent;
    border-width: 0 4px;
}

.task .ic {
    margin: 0;
}

.task.open {
    background: linear-gradient(#76b2e4 0 0) bottom / 26px 2px no-repeat;
}

.task.active {
    border-width: 0;
    background: linear-gradient(#76b2e4 0 0) bottom / 100% 2px no-repeat #313437;
}

.tray {
    display: flex;
    align-items: center;
    margin-left: auto;
    padding-right: 17px;
    font-size: 11.5px;
}

.tray-icons {
    width: 82px;
    height: 16px;
    margin-right: 9px;
}

.tray span {
    margin-bottom: 2px;
}

.tray .clock {
    margin-left: 14px;
}
```
FILE: script.js
```js
const CM = 35.27;
const SVG = 'http://www.w3.org/2000/svg';

// Window position of the canvas corner
const ORIGIN = { x: 143, y: 191 };

// Spread the letters so the text fills the given width
function fitText(el, width) {
    el.style.letterSpacing = '0px';
    const vertical = getComputedStyle(el).writingMode !== 'horizontal-tb';
    const range = document.createRange();
    range.selectNodeContents(el);
    const box = range.getBoundingClientRect();
    const natural = vertical ? box.height : box.width;
    el.style.letterSpacing = ((width - natural) / el.textContent.length) + 'px';
}

function shape(svg, name, attrs, text) {
    const el = document.createElementNS(SVG, name);
    for (const key in attrs) el.setAttribute(key, attrs[key]);
    if (text) el.textContent = text;
    svg.appendChild(el);
}

// Horizontal ruler
const hruler = document.getElementById('hruler');
for (let q = 1; q < 81; q++) {
    const x = q * CM / 4 - 0.5;
    if (q % 4 === 0) {
        shape(hruler, 'text', { x: x, y: 10, class: 'ruler-text', 'text-anchor': 'middle' }, String(q / 4));
    } else if (q % 2 === 0) {
        shape(hruler, 'rect', { x: Math.round(x), y: 4, width: 1, height: 5, fill: '#333' });
    } else {
        shape(hruler, 'rect', { x: Math.round(x), y: 6, width: 1, height: 1, fill: '#333' });
    }
}
[166, 246.5, 299, 351, 478.5, 606.5, 733, 785, 870].forEach(x => {
    const left = Math.round(x) - 163;
    shape(hruler, 'path', { d: `M${left - 4} 7.500h8v3.500l-4 4-4-4z`, fill: '#fff', 'fill-opacity': 0.7, stroke: '#333' });
});

// Vertical rulers, one for each section
document.querySelectorAll('.section').forEach(section => {
    const body = document.createElement('div');
    body.className = 'body';
    const ruler = document.createElementNS(SVG, 'svg');
    ruler.setAttribute('class', 'vruler');
    body.appendChild(ruler);
    section.appendChild(body);

    const height = section.clientHeight - 4;
    const origin = Number(section.dataset.origin || 0);
    for (let q = 1; origin + q * CM / 4 < height - 1; q++) {
        const y = origin + q * CM / 4;
        if (y < 0) continue;
        if (q % 4 === 0) {
            shape(ruler, 'text', { transform: `translate(11 ${y}) rotate(-90)`, class: 'ruler-text', 'text-anchor': 'middle' }, String(q / 4));
        } else if (q % 2 === 0) {
            shape(ruler, 'rect', { x: 5, y: Math.round(y), width: 5, height: 1, fill: '#333' });
        } else {
            shape(ruler, 'rect', { x: 7, y: Math.round(y), width: 1, height: 1, fill: '#333' });
        }
    }
    if (section.dataset.marker) {
        const y = Number(section.dataset.marker);
        shape(ruler, 'path', { d: `M7.500 ${y - 4}v8h3.500l3.500-4-3.500-4z`, fill: '#fff', stroke: '#333' });
    }
});

// Object frames: x, y, width, height, corner classes
const frames = [
    [163, 188, 708, 20, ''],
    [164, 211, 707, 14, ''],
    [668, 240, 65, 14, 'red-right'],
    [181, 266, 492, 14, ''],
    [167, 285, 35, 13, 'red-left'],
    [211, 285, 25, 13, ''],
    [247, 285, 52, 13, 'red-left red-right'],
    [299, 285, 98, 13, 'red-left'],
    [407, 285, 212, 13, ''],
    [627, 285, 38, 13, ''],
    [672, 285, 61, 14, 'red-right'],
    [733, 285, 61, 13, 'red-left'],
    [167, 305, 35, 13, 'red-left red-right'],
    [210, 305, 27, 13, 'red-left red-right'],
    [239, 305, 60, 13, 'red-right'],
    [299, 305, 97, 13, 'red-left red-right'],
    [403, 305, 221, 13, 'red-left red-right'],
    [629, 305, 36, 13, 'red-left red-right'],
    [668, 305, 65, 13, 'red-left red-right'],
    [737, 305, 57, 13, 'red-left red-right'],
    [167, 387, 35, 12, 'red-left'],
    [210, 387, 27, 12, ''],
    [239, 387, 60, 12, 'red-right'],
    [403, 387, 221, 13, ''],
    [629, 387, 36, 13, ''],
    [668, 387, 65, 13, 'red-right'],
    [737, 387, 57, 13, ''],
    [668, 463, 65, 14, 'red-right'],
    [504, 500, 102, 14, 'red-left red-right'],
    [618, 500, 45, 14, 'red-right'],
    [668, 500, 82, 14, 'red-left red-right'],
    [167, 536, 703, 32, 'red-right'],
    [163, 587, 708, 14, ''],
    [163, 604, 713, 13, ''],
    [163, 628, 715, 14, '']
];

// Text: x, baseline, width, size, content, classes
const texts = [
    [163, 203.5, 266, 16.5, 'Informe de Ventas por vendedor', 'bold'],
    [164, 224, 77, 15.5, 'Parametros', ''],
    [166, 247, 104, 12, '@DatosVendedor', 'bold'],
    [670, 251, 63, 12, 'ea con IVA', 'bold'],
    [181, 278, 105, 12, '@TextoFelicitacion', ''],
    [175, 293.5, 17, 9.5, 'No.', 'bold'],
    [211, 293.5, 26, 9.5, 'Linea', 'bold'],
    [254.5, 293.5, 35, 9.5, 'Familia', 'bold'],
    [332, 293.5, 31, 9.5, 'Grupo', 'bold'],
    [494, 293.5, 37, 9.5, 'Articulo', 'bold'],
    [636, 293.5, 20, 9.5, 'Cta.', 'bold'],
    [690, 294.5, 24, 9.5, 'Total', 'bold'],
    [732, 293.5, 64, 9.5, 'C.Proyectada', 'bold'],
    [403, 396, 72, 9.5, 'Nombre Articulo', 'green'],
    [299, 314.5, 97, 9.5, 'Nombre Grupo Articul', ''],
    [403, 314.5, 72, 9.5, 'Nombre Articulo', ''],
    [539, 476.5, 43, 12, 'antidad', 'bold gray'],
    [670, 474.5, 63, 12, 'ea con IVA', 'bold'],
    [504, 511, 79, 12, 'Total general:', 'bold'],
    [619, 511, 44, 12, 'antidad', 'bold'],
    [668, 511, 81, 12, 'Linea con IVA', 'bold'],
    [166, 547, 90, 12, '@TotalEnLetras', ''],
    [259, 596.5, 473, 9.5, 'Generado desde SAP Business One. Implementado por INTEGRA (El mejor partner en Centro', ''],
    [734, 596.5, 41, 10.5, 'América)', ''],
    [487, 613, 65, 9.5, 'Página N de M', ''],
    [381, 636.5, 280, 9.5, 'Fecha de Impresión: {Fecha de impresión} {Hora de impresión}', '']
];

// Both detail sections repeat the same columns
[314.5, 396].forEach(y => texts.push(
    [168, y, 34, 9.5, 'ocNum', ''],
    [211, y, 25, 9.5, 'Linea', ''],
    [240, y, 57, 9.5, 'Nombre Fam', ''],
    [631, y, 34, 9.5, 'antidad', ''],
    [670, y, 63, 9.5, 'Linea con IVA', ''],
    [737, y, 57, 9.5, 'nProyectada', '']
));

// Rules: x, y, width, class
const lines = [
    [166, 450, 703, 'dashed'],
    [163, 580, 708, 'dashed'],
    [538, 481, 44, 'light'],
    [504, 515, 102, ''],
    [504, 517, 102, ''],
    [618, 516, 45, ''],
    [618, 518, 45, ''],
    [668, 516, 82, ''],
    [668, 518, 82, '']
];

const canvas = document.getElementById('canvas');

function place(className, x, y) {
    const el = document.createElement('div');
    el.className = className;
    el.style.left = (x - ORIGIN.x) + 'px';
    el.style.top = (y - ORIGIN.y) + 'px';
    canvas.appendChild(el);
    return el;
}

frames.forEach(([x, y, w, h, corners]) => {
    const el = place('field ' + corners, x, y);
    el.style.width = w + 'px';
    el.style.height = h + 'px';
});

lines.forEach(([x, y, w, kind]) => {
    place('line ' + kind, x, y).style.width = w + 'px';
});

texts.forEach(([x, base, w, size, content, style]) => {
    const el = place('text ' + style, x, base - size * 0.8465);
    el.style.fontSize = size + 'px';
    el.style.whiteSpace = 'nowrap';
    el.textContent = content;
    fitText(el, w);
});

document.querySelectorAll('[data-w]').forEach(el => fitText(el, Number(el.dataset.w)));
```
